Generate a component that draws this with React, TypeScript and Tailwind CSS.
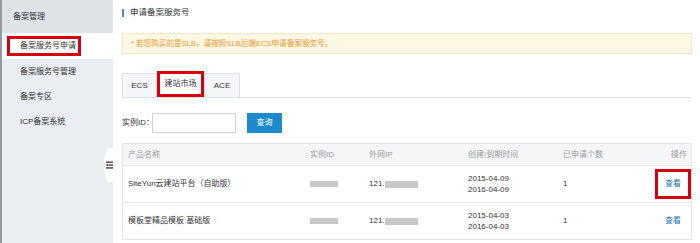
const font = "font-['Liberation_Sans','Noto_Sans_CJK_SC',sans-serif]";

const sideItems = ["备案服务号管理", "备案专区", "ICP备案系统"];

interface Row {
  name: string;
  created: string;
  expires: string;
  count: string;
  marked: boolean;
}

const rows: Row[] = [
  { name: "SiteYun云建站平台（自助版）", created: "2015-04-09", expires: "2016-04-09", count: "1", marked: true },
  { name: "模板堂精品模板 基础版", created: "2015-04-03", expires: "2016-04-03", count: "1", marked: false },
];

const cols = "grid grid-cols-[181px_59px_99px_95px_1fr_60px]";

function Sidebar() {
  return (
    <aside className="w-[113px] shrink-0 flex flex-col bg-[#eaedf1] border-l-2 border-[#959aa2] text-[8px] text-[#333]">
      <div className="h-[33px] bg-[#dfe3e8] flex items-center pl-[11px]">备案管理</div>
      <div className="h-[26px] bg-white flex items-center pl-[5px]">
        <span className="h-[20px] w-[74px] border-[3px] border-[#d6000f] flex items-center pl-[10px]">
          备案服务号申请
        </span>
      </div>
      {sideItems.map((item) => (
        <div key={item} className="h-[25px] flex items-center pl-[18px]">
          {item}
        </div>
      ))}
    </aside>
  );
}

function FoldToggle() {
  return (
    <div className="absolute left-[-9px] top-[148px] w-[9px] h-[34px] bg-white flex items-center justify-center [clip-path:polygon(40%_0,100%_0,100%_100%,40%_100%,0_70%,0_30%)]">
      <svg width="7" height="8" viewBox="0 0 7 8" className="ml-[1px]">
        <rect x="0" y="0.5" width="7" height="1.3" fill="#333" />
        <rect x="2.5" y="3.4" width="4.5" height="1.3" fill="#333" />
        <path d="M0 4.05 L2 2.6 L2 5.5 Z" fill="#333" />
        <rect x="0" y="6.3" width="7" height="1.3" fill="#333" />
      </svg>
    </div>
  );
}

function Tabs() {
  return (
    <div className="mt-[19px] h-[25px] flex items-end border-b border-[#dcdfe3] text-[8px] text-[#333]">
      <div className="h-[24px] w-[35px] flex items-center justify-center bg-[#f5f6f7] border border-b-0 border-[#dcdfe3]">
        ECS
      </div>
      <div className="h-[26px] w-[47px] flex items-center justify-center bg-white border-[3px] border-[#d6000f]">
        建站市场
      </div>
      <div className="h-[24px] w-[36px] flex items-center justify-center bg-[#f5f6f7] border border-b-0 border-[#dcdfe3]">
        ACE
      </div>
    </div>
  );
}

function Table() {
  return (
    <div className="mt-[10px] border border-[#e3e6ea] text-[8px]">
      <div className={`${cols} h-[21px] items-center bg-[#f5f6f8] text-[#9a9a9a]`}>
        <div className="pl-[5px]">产品名称</div>
        <div className="pl-[6px]">实例ID</div>
        <div className="pl-[6px]">外网IP</div>
        <div className="pl-[6px]">创建/到期时间</div>
        <div className="pl-[6px]">已申请个数</div>
        <div className="text-right pr-[4px]">操作</div>
      </div>
      {rows.map((r) => (
        <div key={r.name} className={`${cols} h-[37px] items-center border-t border-[#e3e6ea] text-[#333]`}>
          <div className="pl-[5px]">{r.name}</div>
          <div className="pl-[6px]">
            <span className="block w-[28px] h-[6px] bg-[#c8c8c8]" />
          </div>
          <div className="pl-[6px] flex items-center">
            121.<span className="inline-block w-[33px] h-[7px] bg-[#c8c8c8]" />
          </div>
          <div className="pl-[6px] leading-[11px]">
            <div>{r.created}</div>
            <div>{r.expires}</div>
          </div>
          <div className="pl-[6px]">{r.count}</div>
          <div className="flex justify-end">
            <span
              className={`border-[3px] px-[7px] py-[6px] text-[#1f6fb5] ${
                r.marked ? "border-[#d6000f]" : "border-transparent"
              }`}
            >
              查看
            </span>
          </div>
        </div>
      ))}
    </div>
  );
}

export default function App() {
  return (
    <div className={`flex h-[243px] w-[700px] overflow-hidden bg-white ${font}`}>
      <Sidebar />
      <main className="relative flex-1 pl-[9px] pr-[8px] flex flex-col">
        <FoldToggle />
        <div className="h-[25px] flex items-center gap-[6px] text-[8.5px] text-[#333]">
          <span className="w-[2px] h-[8px] bg-[#5f86b8]" />
          申请备案服务号
        </div>
        <div className="mt-[8px] h-[21px] flex items-center pl-[8px] bg-[#fdf7e4] border border-[#f2e7c9] text-[7.6px] text-[#ef9a2f]">
          * 若您购买的是SLB，请按照SLB后端ECS申请备案服务号。
        </div>
        <Tabs />
        <div className="mt-[15px] h-[20px] flex items-center text-[8px] text-[#333]">
          <span className="w-[30px] shrink-0 whitespace-nowrap">实例ID：</span>
          <span className="w-[84px] h-[20px] border border-[#cfd3d8] bg-white" />
          <button className="ml-[11px] w-[35px] h-[20px] bg-[#1c8acb] text-white text-[8px]">查询</button>
        </div>
        <Table />
      </main>
    </div>
  );
}
